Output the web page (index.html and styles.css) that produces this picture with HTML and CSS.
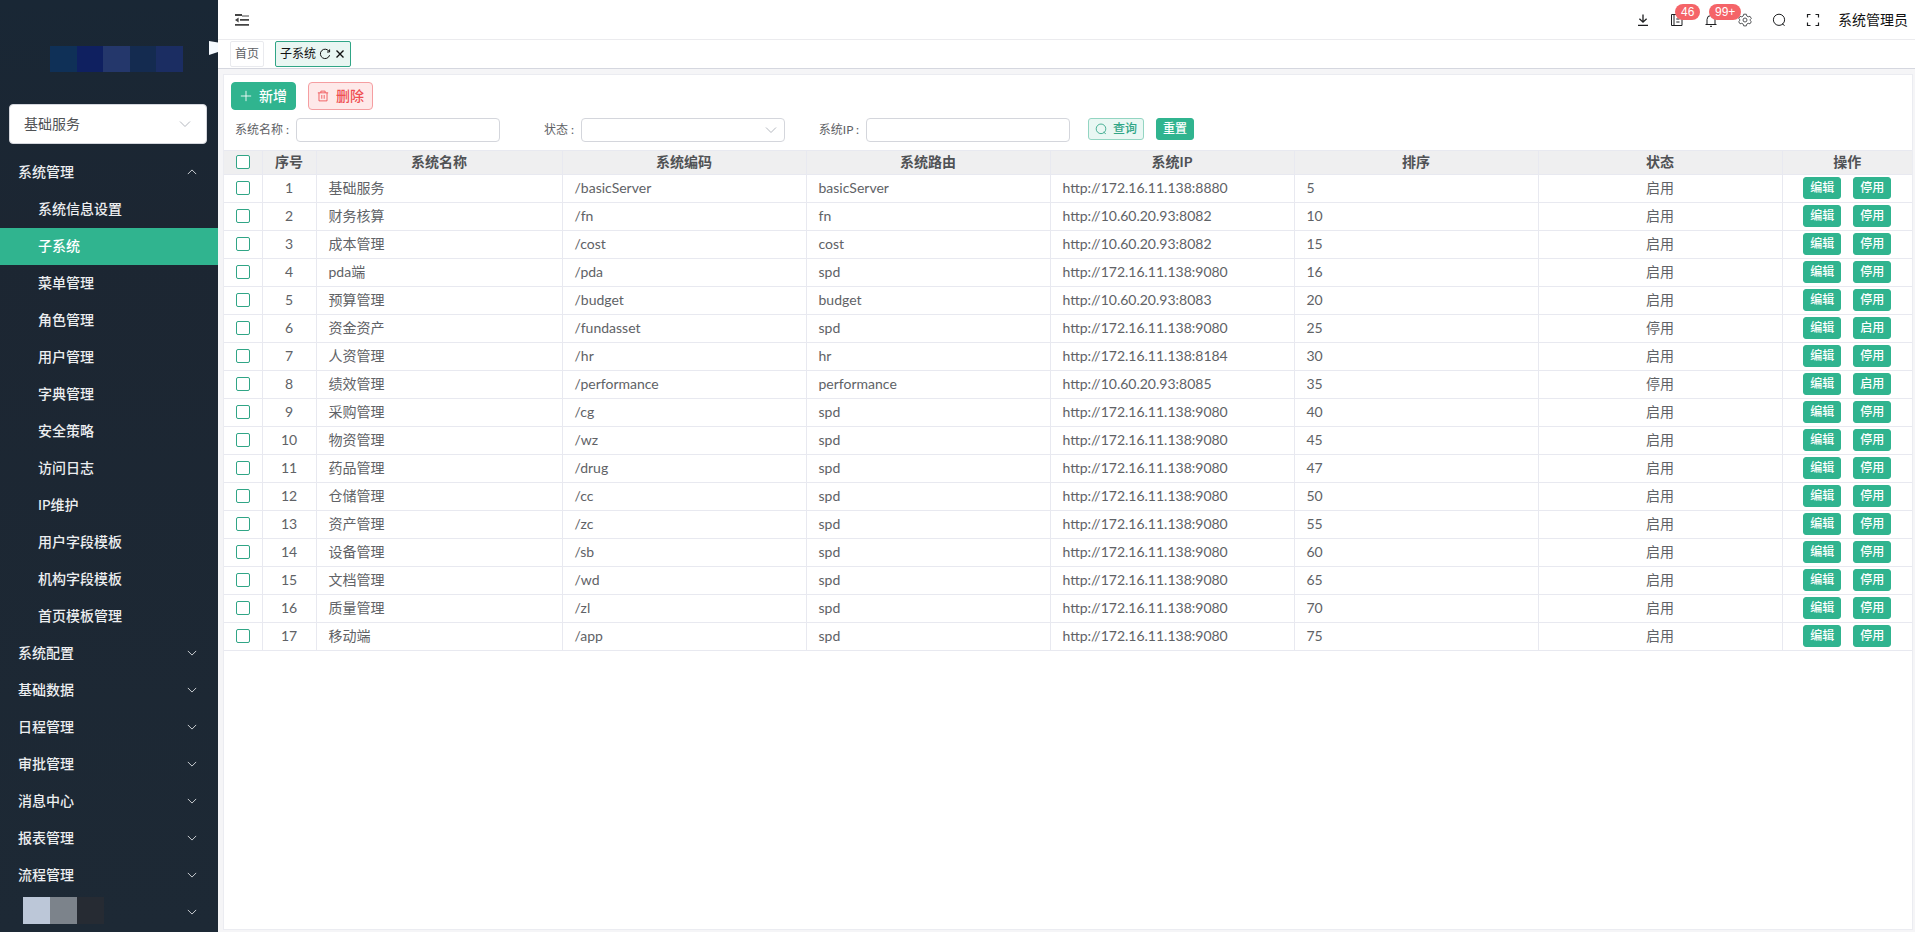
FILE: index.html
```html
<!DOCTYPE html>
<html lang="zh-CN">
<head>
<meta charset="utf-8">
<title>子系统</title>
<link rel="stylesheet" href="styles.css">
</head>
<body>
<svg width="0" height="0" class="sprite" aria-hidden="true">
  <symbol id="down" viewBox="0 0 12 12"><path d="M1 3.5 6 8.5 11 3.5"/></symbol>
  <symbol id="up" viewBox="0 0 12 12"><path d="M1 8.5 6 3.5 11 8.5"/></symbol>
  <symbol id="search" viewBox="0 0 14 14"><circle cx="7" cy="6.8" r="5.6"/><path d="M10 10.6 12.6 12.6"/></symbol>
</svg>
<div class="app">
  <aside class="sidebar">
    <div class="brand"><div class="logo"><i></i><i></i><i></i><i></i><i></i></div></div>
    <div class="system-select">
      <select aria-label="当前系统"><option>基础服务</option></select>
      <svg class="caret"><use href="#down"/></svg>
    </div>
    <nav class="menu" id="menu"></nav>
    <svg class="notch" viewBox="0 0 9 14" aria-hidden="true"><path d="M0 0 9 1.5V11L0 14Z"/></svg>
  </aside>
  <main class="main">
    <header class="topbar">
      <button class="icon-btn fold" aria-label="收起菜单"><svg viewBox="0 0 14 12"><path d="M0 1H7M5 5.9H14M0 10.8H14" stroke-width="1.8"/><path d="M7 2H14"/><path d="M0 6 3.6 3.6V8.4Z" class="solid"/></svg></button>
      <div class="tools">
        <div class="tool-icons">
          <button class="icon-btn" aria-label="下载"><svg viewBox="0 0 14 14"><path d="M7 1.5V9M3.4 5.8 7 9.2 10.6 5.8M2 12.3H12" stroke-width="1.3"/></svg></button>
          <button class="icon-btn" aria-label="待办"><svg viewBox="0 0 14 14"><path d="M4 12.5H1.5V1.5H4M4 1.5H12V12.5H4ZM6.3 6H9.5M6.3 9H9.5"/></svg><span class="badge">46</span></button>
          <button class="icon-btn" aria-label="通知"><svg viewBox="0 0 14 14"><path d="M1.5 11.5H12.5M3 11.5V6.5A4 4 0 0 1 11 6.5V11.5M6 13.3H8M7 1V2.5"/></svg><span class="badge">99+</span></button>
          <button class="icon-btn gear" aria-label="设置"><svg viewBox="0 0 14 14"><path d="M5.7 1.2H8.3L8.8 3 10.2 3.8 12 3.3 13.3 5.5 12 6.8V7.4L13.3 8.6 12 10.8 10.2 10.3 8.8 11.1 8.3 12.9H5.7L5.2 11.1 3.8 10.3 2 10.8 .7 8.6 2 7.3V6.7L.7 5.5 2 3.3 3.8 3.8 5.2 3Z"/><circle cx="7" cy="7" r="2"/></svg></button>
          <button class="icon-btn" aria-label="搜索"><svg><use href="#search"/></svg></button>
          <button class="icon-btn" aria-label="全屏"><svg viewBox="0 0 14 14"><path d="M1.5 4.5V1.5H4.5M9.5 1.5H12.5V4.5M12.5 9.5V12.5H9.5M4.5 12.5H1.5V9.5" stroke-width="1.2"/></svg></button>
        </div>
        <span class="user">系统管理员</span>
      </div>
    </header>
    <div class="tabs">
      <a class="tab" href="#">首页</a>
      <a class="tab current" href="#">子系统
        <svg viewBox="0 0 12 12"><path d="M10.2 3.6A4.7 4.7 0 1 0 10.6 7.2M10.6 1.4V4H8"/></svg>
        <svg viewBox="0 0 12 12"><path d="M2.5 2.5 9.5 9.5M9.5 2.5 2.5 9.5" stroke-width="1.4"/></svg>
      </a>
    </div>
    <section class="panel">
      <div class="actions">
        <button class="btn primary"><svg viewBox="0 0 14 14"><path d="M7 1V13M1 7H13"/></svg>新增</button>
        <button class="btn danger"><svg viewBox="0 0 14 14"><path d="M1 3.3H13M4.5 3.3V1.3H9.5V3.3M2.3 3.3V12.7H11.7V3.3M5.6 5.8V10.2M8.4 5.8V10.2"/></svg>删除</button>
      </div>
      <form class="filters">
        <div class="field"><label for="f-name">系统名称 :</label><input type="text" id="f-name"></div>
        <div class="field"><label for="f-state">状态 :</label><span class="select-box"><select id="f-state"><option></option></select><svg class="caret"><use href="#down"/></svg></span></div>
        <div class="field"><label for="f-ip">系统IP :</label><input type="text" id="f-ip"></div>
        <div class="form-actions">
          <button type="button" class="btn small plain"><svg><use href="#search"/></svg>查询</button>
          <button type="button" class="btn small primary">重置</button>
        </div>
      </form>
      <table class="grid">
        <colgroup><col class="c-check"><col class="c-index"><col class="c-name"><col><col><col><col><col><col class="c-ops"></colgroup>
        <thead><tr><th><input type="checkbox" aria-label="全选"></th><th>序号</th><th>系统名称</th><th>系统编码</th><th>系统路由</th><th>系统IP</th><th>排序</th><th>状态</th><th>操作</th></tr></thead>
        <tbody id="rows"></tbody>
      </table>
    </section>
  </main>
</div>
<script src="app.js"></script>
</body>
</html>
```
FILE: app.js
```js
const children = ['系统信息设置', '子系统', '菜单管理', '角色管理', '用户管理', '字典管理', '安全策略', '访问日志', 'IP维护', '用户字段模板', '机构字段模板', '首页模板管理'];
const groups = ['系统配置', '基础数据', '日程管理', '审批管理', '消息中心', '报表管理', '流程管理'];
const group = (label, icon) =>
  `<button class="group">${label}<svg class="chev"><use href="#${icon}"/></svg></button>`;

document.getElementById('menu').innerHTML =
  group('系统管理', 'up') +
  children.map(c => `<a class="item${c === '子系统' ? ' active' : ''}" href="#">${c}</a>`).join('') +
  groups.map(g => group(g, 'down')).join('') +
  group('<span class="masked"><i></i><i></i><i></i></span>', 'down');

const A = 'http://172.16.11.138:', B = 'http://10.60.20.93:';
const rows = [
  ['基础服务', '/basicServer', 'basicServer', A + '8880', 5, '启用'],
  ['财务核算', '/fn', 'fn', B + '8082', 10, '启用'],
  ['成本管理', '/cost', 'cost', B + '8082', 15, '启用'],
  ['pda端', '/pda', 'spd', A + '9080', 16, '启用'],
  ['预算管理', '/budget', 'budget', B + '8083', 20, '启用'],
  ['资金资产', '/fundasset', 'spd', A + '9080', 25, '停用'],
  ['人资管理', '/hr', 'hr', A + '8184', 30, '启用'],
  ['绩效管理', '/performance', 'performance', B + '8085', 35, '停用'],
  ['采购管理', '/cg', 'spd', A + '9080', 40, '启用'],
  ['物资管理', '/wz', 'spd', A + '9080', 45, '启用'],
  ['药品管理', '/drug', 'spd', A + '9080', 47, '启用'],
  ['仓储管理', '/cc', 'spd', A + '9080', 50, '启用'],
  ['资产管理', '/zc', 'spd', A + '9080', 55, '启用'],
  ['设备管理', '/sb', 'spd', A + '9080', 60, '启用'],
  ['文档管理', '/wd', 'spd', A + '9080', 65, '启用'],
  ['质量管理', '/zl', 'spd', A + '9080', 70, '启用'],
  ['移动端', '/app', 'spd', A + '9080', 75, '启用']
];
document.getElementById('rows').innerHTML = rows.map((r, i) => `<tr>
  <td class="mid"><input type="checkbox" aria-label="选择${r[0]}"></td><td class="mid">${i + 1}</td>
  ${r.slice(0, 5).map(v => `<td>${v}</td>`).join('')}
  <td class="mid">${r[5]}</td>
  <td><div class="ops"><button class="btn small primary">编辑</button><button class="btn small primary">${r[5] === '启用' ? '停用' : '启用'}</button></div></td>
</tr>`).join('');
```
FILE: styles.css
```css
* { box-sizing: border-box; }
body {
  margin: 0;
  font: 14px/20px Lato, "Noto Sans CJK SC", sans-serif;
  color: #606266;
}
button, input, select { font: inherit; color: inherit; margin: 0; }
button { cursor: pointer; }
a { color: inherit; text-decoration: none; }
svg { fill: none; stroke: currentColor; flex: none; }
.sprite { position: absolute; }
.solid { fill: currentColor; stroke: none; }
.app { display: flex; height: 100vh; background: #f5f5f7; }

.sidebar {
  position: relative;
  flex: 0 0 218px;
  display: flex;
  flex-direction: column;
  background: linear-gradient(#192735, #1c2632 25%, #1d2935);
  overflow: hidden;
}
.brand { padding: 46px 35px 32px 50px; }
.logo { display: grid; grid-template-columns: repeat(5, 1fr); height: 26px; }
.logo i:nth-child(1) { background: #0f3057; }
.logo i:nth-child(2) { background: #0f2060; }
.logo i:nth-child(3) { background: #24376b; }
.logo i:nth-child(4) { background: #142b50; }
.logo i:nth-child(5) { background: #1b2d62; }
.notch { position: absolute; right: 0; top: 41px; width: 9px; height: 14px; fill: #f5faff; stroke: none; }
.system-select { position: relative; margin: 0 11px 10px 9px; }
select { appearance: none; border-radius: 4px; background: #fff; border: 1px solid #d4d6dc; width: 100%; }
.system-select select { height: 40px; padding: 0 14px; display: block; color: #505255; }
.caret { position: absolute; right: 16px; top: 14px; width: 12px; height: 12px; color: #b4b8bf; pointer-events: none; }
.menu { display: flex; flex-direction: column; color: #eceef0; font-weight: 500; }
.group, .item { height: 37px; flex: none; display: flex; align-items: center; padding-bottom: 2px; }
.group { border: 0; background: none; padding: 0 21px 2px 18px; justify-content: space-between; }
.item { padding-left: 38px; }
.item.active { background: #30b48f; color: #fff; }
.chev { width: 10px; height: 10px; }
.masked { display: flex; padding: 0 0 2px 5px; }
.masked i { width: 27px; height: 27px; background: #bcc7d8; }
.masked i:nth-child(2) { background: #7c838b; }
.masked i:nth-child(3) { background: #262b33; }

.main { flex: 1; min-width: 0; display: flex; flex-direction: column; }
.topbar {
  display: flex;
  align-items: center;
  justify-content: space-between;
  height: 40px;
  padding: 0 7px 0 17px;
  background: #fff;
  border-bottom: 1px solid #ebebee;
}
.icon-btn { position: relative; display: flex; border: 0; padding: 0; background: none; color: #1d1e20; }
.icon-btn svg { width: 14px; height: 14px; }
.fold { color: #444; }
.gear { color: #55575a; }
.tools { display: flex; align-items: center; gap: 18px; color: #111; }
.tool-icons { display: flex; gap: 20px; }
.badge {
  position: absolute;
  left: 5px;
  top: -9px;
  padding: 0 6px;
  border-radius: 8px;
  background: #f56468;
  color: #fff;
  font: 12px/16px "Liberation Sans", Arial, sans-serif;
  z-index: 1;
}
.tabs {
  display: flex;
  align-items: center;
  gap: 11px;
  height: 29px;
  padding-left: 12px;
  background: #fff;
  border-bottom: 1px solid #d5d7df;
  font-size: 12px;
}
.tab { display: flex; align-items: center; gap: 4px; height: 26px; padding: 0 4px; border: 1px solid #e9eaee; border-radius: 2px; }
.tab.current { gap: 3px; border-color: #30a586; background: #e9f6f2; color: #111; }
.tab svg { width: 12px; height: 12px; }

.panel { flex: 1; margin: 5px 2px 2px 5px; padding-top: 7px; background: #fff; border: 1px solid #ebecf1; }
.actions { display: flex; gap: 12px; padding-left: 7px; }
.btn {
  display: inline-flex;
  align-items: center;
  justify-content: center;
  gap: 7px;
  height: 28px;
  padding: 0 8px;
  border: 1px solid #30b48f;
  border-radius: 4px;
  font-weight: 500;
}
.btn svg { width: 12px; height: 12px; }
.primary { background: #30b48f; color: #fff; }
.danger { background: #fee9e9; border-color: #f59ea1; color: #ef4f52; }
.plain { background: #e9f7f3; border-color: #93d5c2; color: #30a586; }
.small { gap: 6px; height: 22px; padding: 0 6px; border-radius: 3px; font-size: 12px; }
.filters { display: flex; padding: 8px 0 8px 11px; font-size: 12px; }
.field { display: flex; align-items: center; gap: 7px; }
.field + .field { margin-left: 32px; }
.field label { min-width: 42px; text-align: right; white-space: nowrap; }
.form-actions { display: flex; gap: 12px; margin-left: 18px; }
.field input, .field select { display: block; width: 204px; height: 24px; padding: 0 8px; border: 1px solid #d4d6dc; border-radius: 4px; }
.select-box { position: relative; }
.select-box .caret { right: 8px; top: 6px; }

.grid { width: 100%; table-layout: fixed; border-collapse: collapse; }
.c-check { width: 38px; }
.c-index { width: 54px; }
.c-name { width: 246px; }
.c-ops { width: 130px; }
th, td { border: 1px solid #e8e9f0; padding: 0 12px 2px; height: 28px; line-height: 20px; }
th:first-child, td:first-child { border-left: 0; padding: 0 0 2px; }
th:nth-child(2), td:nth-child(2) { padding: 0 0 2px; }
th:last-child, td:last-child { border-right: 0; }
th { height: 24px; background: #efeff0; color: #505255; font-weight: 700; text-align: center; }
.mid { text-align: center; }
.ops { display: flex; justify-content: center; gap: 12px; }
input[type="checkbox"] { appearance: none; display: block; margin: 0 auto; width: 14px; height: 14px; border: 1px solid #30a586; border-radius: 2px; background: #fff; }
```
